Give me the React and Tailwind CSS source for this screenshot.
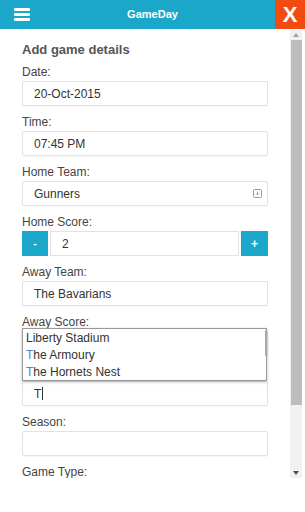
import React from "react";

const Field = ({ label, children, className = "" }) => (
    <div className={`mb-[9px] ${className}`}>
        <div className="h-[14px] text-[12px] leading-[14px] text-[#444] mb-[2px]">{label}</div>
        {children}
    </div>
);

const TextBox = ({ children, icon }) => (
    <div className="h-[25px] border border-[#e2e2e2] rounded-[2px] bg-white flex items-center pl-[11px] pr-[3px] text-[12px] text-[#333] shadow-[0_1px_1px_rgba(0,0,0,0.04)]">
        <div className="flex-1 flex items-center">{children}</div>
        {icon}
    </div>
);

const App = () => {
    return (
        <div
            className="w-[305px] h-[512px] bg-white overflow-hidden"
            style={{ fontFamily: '"Liberation Sans", Arial, sans-serif' }}
        >
            {/* Header */}
            <div className="h-[29px] flex relative">
                <div className="flex-1 bg-[#1ba7ca] flex items-center pl-[14px]">
                    <div className="flex flex-col gap-[2px]">
                        <span className="block w-[16px] h-[3px] bg-white rounded-[1px]" />
                        <span className="block w-[16px] h-[3px] bg-white rounded-[1px]" />
                        <span className="block w-[16px] h-[3px] bg-white rounded-[1px]" />
                    </div>
                </div>
                <div className="w-[30px] bg-[#f24b12] flex items-center justify-center text-white font-bold text-[22px] leading-none">
                    X
                </div>
                <div className="absolute left-0 right-0 top-0 h-[29px] flex items-center justify-center text-white font-bold text-[11px] pointer-events-none">
                    GameDay
                </div>
            </div>

            {/* Body */}
            <div className="flex h-[449px]">
                <div className="flex-1 overflow-hidden px-[22px] pt-[13px]">
                    <h2 className="text-[13px] leading-[16px] font-bold text-[#555] mb-[7px]">
                        Add game details
                    </h2>

                    <Field label="Date:">
                        <TextBox>20-Oct-2015</TextBox>
                    </Field>

                    <Field label="Time:">
                        <TextBox>07:45 PM</TextBox>
                    </Field>

                    <Field label="Home Team:">
                        <TextBox
                            icon={
                                <svg width="10" height="10" viewBox="0 0 10 10" className="mr-[1px]">
                                    <rect x="0.5" y="0.5" width="8" height="8" rx="1" fill="none" stroke="#999" />
                                    <path d="M4.5 2.5v3M3 4.5l1.5 1.5 1.5-1.5" fill="none" stroke="#999" strokeWidth="0.9" />
                                </svg>
                            }
                        >
                            Gunners
                        </TextBox>
                    </Field>

                    <Field label="Home Score:">
                        <div className="flex h-[25px] gap-[2px]">
                            <div className="w-[26px] bg-[#1ba7ca] flex items-center justify-center text-white text-[11px] font-bold">
                                -
                            </div>
                            <div className="flex-1 border border-[#e2e2e2] flex items-center pl-[11px] text-[12px] text-[#333]">
                                2
                            </div>
                            <div className="w-[27px] bg-[#1ba7ca] flex items-center justify-center text-white text-[12px] font-bold">
                                +
                            </div>
                        </div>
                    </Field>

                    <Field label="Away Team:">
                        <TextBox>The Bavarians</TextBox>
                    </Field>

                    <Field label="Away Score:" className="relative">
                        <TextBox>{""}</TextBox>
                        {/* Autocomplete list over the venue field */}
                        <div className="absolute left-0 top-[13px] w-[245px] h-[53px] bg-white border border-[#9a9a9a] shadow-[0_1px_3px_rgba(0,0,0,0.25)] pl-[3px] pt-[1px] text-[12px] text-[#333] z-10">
                            <div className="leading-[17px]">Liberty Stadium</div>
                            <div className="leading-[17px]">
                                <span className="text-[#4a86c0]">T</span>he Armoury
                            </div>
                            <div className="leading-[17px]">
                                <span className="text-[#4a86c0]">T</span>he Hornets Nest
                            </div>
                            <div className="absolute right-[-1px] top-[1px] w-[2px] h-[26px] bg-[#a8a8a8]" />
                        </div>
                    </Field>

                    {/* Venue (label hidden under the list) */}
                    <Field label="">
                        <TextBox>
                            T<span className="inline-block w-[1px] h-[13px] bg-[#333] ml-[1px]" />
                        </TextBox>
                    </Field>

                    <Field label="Season:">
                        <TextBox>{""}</TextBox>
                    </Field>

                    <Field label="Game Type:">
                        <TextBox>{""}</TextBox>
                    </Field>
                </div>

                {/* Scrollbar */}
                <div className="w-[12px] mr-[3px] mt-[1px] h-[448px] bg-[#f1f1f1] flex flex-col items-center">
                    <div className="h-[10px] flex items-center justify-center">
                        <svg width="6" height="4" viewBox="0 0 6 4">
                            <path d="M0 4L3 0L6 4Z" fill="#a3a3a3" />
                        </svg>
                    </div>
                    <div className="w-[11px] h-[365px] bg-[#bdbdbd]" />
                    <div className="flex-1" />
                    <div className="h-[10px] flex items-center justify-center">
                        <svg width="6" height="4" viewBox="0 0 6 4">
                            <path d="M0 0L3 4L6 0Z" fill="#505050" />
                        </svg>
                    </div>
                </div>
            </div>
        </div>
    );
};

export default App;
